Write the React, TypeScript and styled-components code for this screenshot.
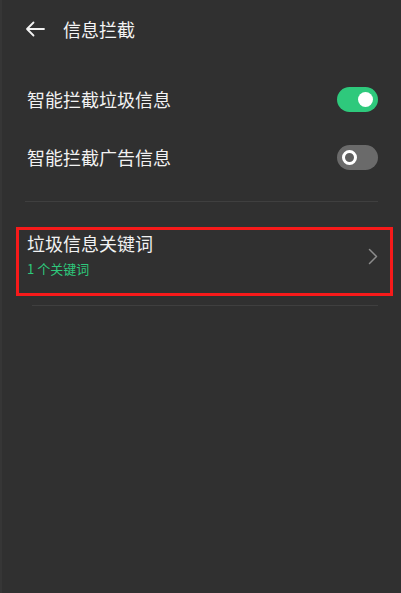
import React, { useState } from 'react'
import styled, { createGlobalStyle } from 'styled-components'

const GlobalStyle = createGlobalStyle`
  html, body {
    margin: 0;
    padding: 0;
    background: #303030;
  }
  body {
    font-family: "Noto Sans CJK SC", "Noto Sans", sans-serif;
    -webkit-font-smoothing: antialiased;
  }
`

const Screen = styled.div`
  width: 401px;
  height: 593px;
  box-sizing: border-box;
  background: #303030;
  border-left: 2px solid #363636;
  display: flex;
  flex-direction: column;
  overflow: hidden;
`

const Header = styled.header`
  height: 57px;
  display: flex;
  align-items: center;
  gap: 17px;
  padding-left: 22px;
`

const BackButton = styled.button`
  width: 22px;
  height: 22px;
  padding: 0;
  border: none;
  background: transparent;
  display: flex;
  align-items: center;
  justify-content: center;
  color: #f2f2f2;
`

const Title = styled.h1`
  margin: 0;
  font-size: 18px;
  font-weight: 400;
  color: #f4f4f4;
  line-height: 24px;
`

const List = styled.div`
  display: flex;
  flex-direction: column;
  padding-top: 13px;
`

const SwitchRow = styled.div`
  height: 58px;
  display: flex;
  align-items: center;
  justify-content: space-between;
  padding: 0 23px 0 25px;
`

const RowLabel = styled.span`
  font-size: 18px;
  line-height: 24px;
  color: #f2f2f2;
`

const Track = styled.button<{ $on: boolean }>`
  position: relative;
  width: 41px;
  height: 25px;
  padding: 0;
  border: none;
  border-radius: 13px;
  background: ${(p) => (p.$on ? '#2ec97c' : '#6a6a6a')};
  cursor: pointer;
`

const Knob = styled.span<{ $on: boolean }>`
  position: absolute;
  top: 5px;
  left: ${(p) => (p.$on ? '21px' : '5px')};
  width: 15px;
  height: 15px;
  box-sizing: border-box;
  border-radius: 50%;
  background: ${(p) => (p.$on ? '#ffffff' : '#5e5e5e')};
  border: ${(p) => (p.$on ? 'none' : '3px solid #ffffff')};
`

const Divider = styled.hr<{ $inset: number }>`
  margin: 0 23px 0 ${(p) => p.$inset}px;
  border: none;
  height: 1px;
  background: #3f3f3f;
`

const Highlight = styled.div`
  margin: 25px 8px 0 14px;
  border: 3px solid #f71a1a;
  padding: 1px 12px 15px 8px;
  display: flex;
  align-items: center;
  justify-content: space-between;
`

const ItemText = styled.div`
  display: flex;
  flex-direction: column;
  gap: 5px;
`

const ItemTitle = styled.span`
  font-size: 18px;
  line-height: 24px;
  color: #f2f2f2;
`

const ItemSub = styled.span`
  font-size: 13px;
  line-height: 18px;
  color: #2ec97c;
`

const Chevron = styled.span`
  display: flex;
  margin-top: 4px;
  color: #8c8c8c;
`

const Toggle = ({ on, onToggle }: { on: boolean; onToggle: () => void }) => (
  <Track $on={on} onClick={onToggle}>
    <Knob $on={on} />
  </Track>
)

const App = (): JSX.Element => {
  const [spam, setSpam] = useState<boolean>(true)
  const [ads, setAds] = useState<boolean>(false)

  return (
    <>
      <GlobalStyle />
      <Screen>
        <Header>
          <BackButton aria-label="返回">
            <svg width="20" height="16" viewBox="0 0 20 16" fill="none">
              <path
                d="M19 8H2M8.5 1.5L2 8l6.5 6.5"
                stroke="currentColor"
                strokeWidth="1.8"
                strokeLinecap="round"
                strokeLinejoin="round"
              />
            </svg>
          </BackButton>
          <Title>信息拦截</Title>
        </Header>

        <List>
          <SwitchRow>
            <RowLabel>智能拦截垃圾信息</RowLabel>
            <Toggle on={spam} onToggle={() => setSpam(!spam)} />
          </SwitchRow>
          <SwitchRow>
            <RowLabel>智能拦截广告信息</RowLabel>
            <Toggle on={ads} onToggle={() => setAds(!ads)} />
          </SwitchRow>
        </List>

        <Divider $inset={23} style={{ marginTop: 15 }} />

        <Highlight>
          <ItemText>
            <ItemTitle>垃圾信息关键词</ItemTitle>
            <ItemSub>1 个关键词</ItemSub>
          </ItemText>
          <Chevron>
            <svg width="10" height="17" viewBox="0 0 10 17" fill="none">
              <path
                d="M1.5 1.5l7 7-7 7"
                stroke="currentColor"
                strokeWidth="1.5"
                strokeLinecap="round"
                strokeLinejoin="round"
              />
            </svg>
          </Chevron>
        </Highlight>

        <Divider $inset={30} style={{ marginTop: 9 }} />
      </Screen>
    </>
  )
}

export default App
